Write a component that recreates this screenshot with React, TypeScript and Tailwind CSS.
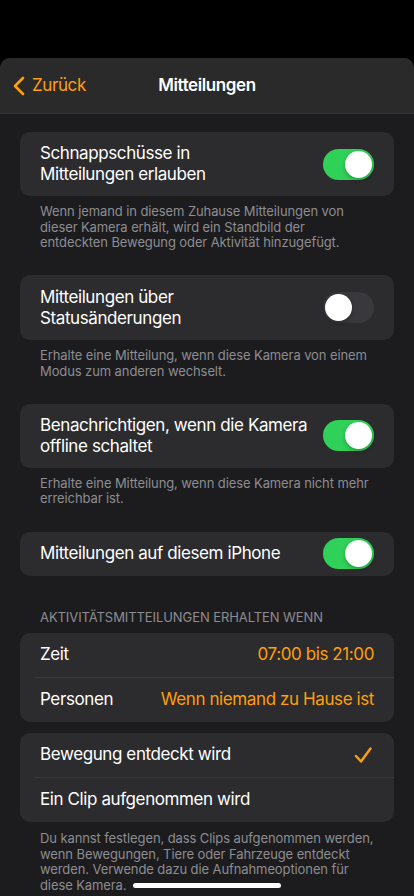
import React from "react";

function Toggle({ on }: { on: boolean }) {
  return (
    <div
      className={
        "relative w-[51px] h-[31px] rounded-full shrink-0 " +
        (on ? "bg-[#30d158]" : "bg-[#39393d]")
      }
    >
      <div
        className={
          "absolute top-[2px] w-[27px] h-[27px] rounded-full bg-white shadow-[0_2px_4px_rgba(0,0,0,0.25)] " +
          (on ? "left-[22px]" : "left-[2px]")
        }
      />
    </div>
  );
}

function Footer({ lines, mt }: { lines: string[]; mt: string }) {
  return (
    <div className={"px-10 text-[13px] leading-[15.7px] text-[#8d8d92] tracking-[-0.1px] whitespace-nowrap " + mt}>
      {lines.map((l, i) => (
        <div key={i}>{l}</div>
      ))}
    </div>
  );
}

export default function App() {
  return (
    <div
      className="relative w-[414px] h-[896px] overflow-hidden bg-black text-white"
      style={{ fontFamily: "Inter, 'Noto Sans', sans-serif" }}
    >
      <div className="mt-[58px] rounded-t-[10px] bg-[#1c1c1e] h-[838px] overflow-hidden">
        {/* Nav */}
        <div className="relative h-[56px] bg-[#2a2a2b] border-b border-[#333335] flex items-center justify-center">
          <div className="absolute left-[12px] top-0 h-full flex items-center gap-[7px] text-[#ff9f0a]">
            <svg width="13" height="20" viewBox="0 0 13 20" fill="none">
              <path d="M11 2 L3 10 L11 18" stroke="#ff9f0a" strokeWidth="2.6" strokeLinecap="round" strokeLinejoin="round" />
            </svg>
            <span className="text-[17px] tracking-[-0.4px]">Zurück</span>
          </div>
          <span className="text-[17px] font-semibold tracking-[-0.4px]">Mitteilungen</span>
        </div>

        {/* Card 1 */}
        <div className="mx-5 mt-[18px] h-[64px] rounded-[10px] bg-[#2c2c2e] pl-5 pr-5 flex items-center justify-between">
          <div className="text-[17px] leading-[21px] tracking-[-0.4px]">
            Schnappschüsse in
            <br />
            Mitteilungen erlauben
          </div>
          <Toggle on={true} />
        </div>
        <Footer
          mt="mt-[8px]"
          lines={[
            "Wenn jemand in diesem Zuhause Mitteilungen von",
            "dieser Kamera erhält, wird ein Standbild der",
            "entdeckten Bewegung oder Aktivität hinzugefügt.",
          ]}
        />

        {/* Card 2 */}
        <div className="mx-5 mt-[24px] h-[65px] rounded-[10px] bg-[#2c2c2e] pl-5 pr-5 flex items-center justify-between">
          <div className="text-[17px] leading-[21px] tracking-[-0.4px]">
            Mitteilungen über
            <br />
            Statusänderungen
          </div>
          <Toggle on={false} />
        </div>
        <Footer
          mt="mt-[8px]"
          lines={[
            "Erhalte eine Mitteilung, wenn diese Kamera von einem",
            "Modus zum anderen wechselt.",
          ]}
        />

        {/* Card 3 */}
        <div className="mx-5 mt-[24px] h-[64px] rounded-[10px] bg-[#2c2c2e] pl-5 pr-5 flex items-center justify-between">
          <div className="text-[17px] leading-[21px] tracking-[-0.4px]">
            Benachrichtigen, wenn die Kamera
            <br />
            offline schaltet
          </div>
          <Toggle on={true} />
        </div>
        <Footer
          mt="mt-[8px]"
          lines={[
            "Erhalte eine Mitteilung, wenn diese Kamera nicht mehr",
            "erreichbar ist.",
          ]}
        />

        {/* Card 4 */}
        <div className="mx-5 mt-[25px] h-[44px] rounded-[10px] bg-[#2c2c2e] pl-5 pr-5 flex items-center justify-between">
          <div className="text-[17px] tracking-[-0.4px]">Mitteilungen auf diesem iPhone</div>
          <Toggle on={true} />
        </div>

        {/* Section header */}
        <div className="px-10 mt-[33px] text-[13px] leading-[16px] text-[#8d8d92] tracking-[-0.08px] uppercase">
          Aktivitätsmitteilungen erhalten wenn
        </div>

        {/* Card 5 */}
        <div className="mx-5 mt-[8px] rounded-[10px] bg-[#2c2c2e]">
          <div className="h-[44px] pl-5 pr-5 flex items-center justify-between">
            <span className="text-[17px] tracking-[-0.4px]">Zeit</span>
            <span className="text-[17px] tracking-[-0.4px] text-[#ff9f0a]">07:00 bis 21:00</span>
          </div>
          <div className="ml-[15px] h-px bg-[#3a3a3c]" />
          <div className="h-[44px] pl-5 pr-5 flex items-center justify-between">
            <span className="text-[17px] tracking-[-0.4px]">Personen</span>
            <span className="text-[17px] tracking-[-0.4px] text-[#ff9f0a]">Wenn niemand zu Hause ist</span>
          </div>
        </div>

        {/* Card 6 */}
        <div className="mx-5 mt-[11px] rounded-[10px] bg-[#2c2c2e]">
          <div className="h-[44px] pl-5 pr-5 flex items-center justify-between">
            <span className="text-[17px] tracking-[-0.4px]">Bewegung entdeckt wird</span>
            <svg width="18" height="16" viewBox="0 0 18 16" fill="none" className="mr-[2px]">
              <path d="M2 9 L7 14.5 L16.5 1.5" stroke="#ff9f0a" strokeWidth="2.4" strokeLinecap="round" strokeLinejoin="round" />
            </svg>
          </div>
          <div className="ml-[15px] h-px bg-[#3a3a3c]" />
          <div className="h-[44px] pl-5 pr-5 flex items-center">
            <span className="text-[17px] tracking-[-0.4px]">Ein Clip aufgenommen wird</span>
          </div>
        </div>
        <Footer
          mt="mt-[9px]"
          lines={[
            "Du kannst festlegen, dass Clips aufgenommen werden,",
            "wenn Bewegungen, Tiere oder Fahrzeuge entdeckt",
            "werden. Verwende dazu die Aufnahmeoptionen für",
            "diese Kamera.",
          ]}
        />
      </div>

      {/* Home indicator */}
      <div className="absolute left-[133px] bottom-[8px] w-[148px] h-[5px] rounded-full bg-white" />
    </div>
  );
}
